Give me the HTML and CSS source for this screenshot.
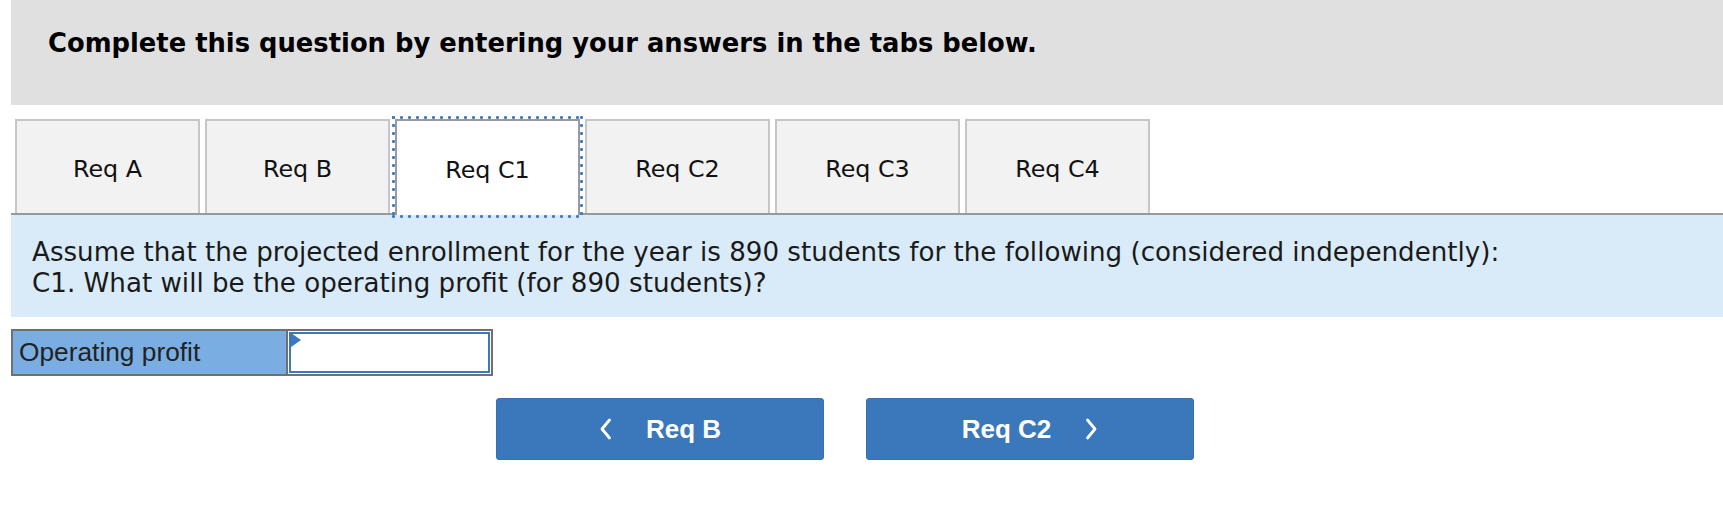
FILE: index.html
```html
<!DOCTYPE html>
<html lang="en">
<head>
<meta charset="utf-8">
<title>Req C1</title>
<link rel="stylesheet" href="styles.css">
</head>
<body>
<div class="page">
  <div class="header">
    <h1 class="header-title">Complete this question by entering your answers in the tabs below.</h1>
  </div>
  <div class="tabs">
    <div class="tab">Req A</div>
    <div class="tab">Req B</div>
    <div class="tab active">Req C1</div>
    <div class="tab">Req C2</div>
    <div class="tab">Req C3</div>
    <div class="tab">Req C4</div>
  </div>
  <div class="prompt">
    <p class="prompt-text">Assume that the projected enrollment for the year is 890 students for the following (considered independently):<br>C1. What will be the operating profit (for 890 students)?</p>
  </div>
  <div class="answer">
    <div class="answer-label">Operating profit</div>
    <div class="answer-cell"><div class="answer-input"></div></div>
  </div>
  <div class="nav">
    <div class="btn">
      <svg class="chev" width="13" height="22" viewBox="0 0 13 22"><polyline points="10.5,2 3,11 10.5,20" fill="none" stroke="#fff" stroke-width="2.8" stroke-linecap="round" stroke-linejoin="round"/></svg>
      <span>Req B</span>
    </div>
    <div class="btn">
      <span>Req C2</span>
      <svg class="chev" width="13" height="22" viewBox="0 0 13 22"><polyline points="2.5,2 10,11 2.5,20" fill="none" stroke="#fff" stroke-width="2.8" stroke-linecap="round" stroke-linejoin="round"/></svg>
    </div>
  </div>
</div>
</body>
</html>
```

FILE: styles.css
```css
html, body {
  margin: 0;
  padding: 0;
  background: #ffffff;
}

body {
  font-family: "DejaVu Sans", Verdana, sans-serif;
  color: #1a1a1a;
}

.page {
  margin-left: 11px;
}

.header {
  background: #e0e0e0;
  height: 105px;
  box-sizing: border-box;
  padding: 28px 0 0 37px;
}

.header-title {
  margin: 0;
  font-size: 25.8px;
  line-height: 30px;
  font-weight: bold;
  color: #000;
}

.tabs {
  display: flex;
  gap: 5px;
  margin-top: 14px;
  padding-left: 4px;
  border-bottom: 2px solid #999999;
  height: 94px;
}

.tab {
  width: 185px;
  height: 94px;
  box-sizing: border-box;
  border: 2px solid #c6c6c6;
  border-bottom: none;
  background: #f2f2f2;
  display: flex;
  align-items: center;
  justify-content: center;
  font-size: 23.8px;
  color: #111;
  padding-top: 4px;
}

.tab.active {
  position: relative;
  background: #ffffff;
  border-color: #9a9a9a;
  height: 96px;
  margin-bottom: -2px;
}

.tab.active::after {
  content: "";
  position: absolute;
  left: -5px;
  right: -5px;
  top: -5px;
  bottom: -3px;
  background:
    radial-gradient(circle at 1.5px 1.5px, #3c7cc7 1.3px, transparent 1.7px) left top / 8px 3px repeat-x,
    radial-gradient(circle at 1.5px 1.5px, #3c7cc7 1.3px, transparent 1.7px) left bottom / 8px 3px repeat-x,
    radial-gradient(circle at 1.5px 1.5px, #3c7cc7 1.3px, transparent 1.7px) left top / 3px 8px repeat-y,
    radial-gradient(circle at 1.5px 1.5px, #3c7cc7 1.3px, transparent 1.7px) right top / 3px 8px repeat-y;
  pointer-events: none;
}

.prompt {
  background: #d9ebf8;
  height: 102px;
  box-sizing: border-box;
  padding: 22px 21px 0 21px;
}

.prompt-text {
  margin: 0;
  font-size: 26.15px;
  line-height: 30.6px;
  color: #1a1a1a;
}

.answer {
  display: flex;
  margin-top: 12px;
  width: 482px;
  height: 47px;
  box-sizing: border-box;
  border: 2px solid #707070;
}

.answer-label {
  width: 275px;
  box-sizing: border-box;
  background: #7aaee3;
  border-right: 2px solid #707070;
  font-family: "Liberation Sans", Arial, sans-serif;
  font-size: 26.3px;
  color: #222;
  display: flex;
  align-items: center;
  padding-left: 6px;
}

.answer-cell {
  flex: 1;
  padding: 1px;
  background: #fff;
}

.answer-input {
  position: relative;
  height: 100%;
  box-sizing: border-box;
  border: 2px solid #3a78c0;
  background: #fff;
}

.answer-input::before {
  content: "";
  position: absolute;
  left: 0;
  top: -1px;
  width: 0;
  height: 0;
  border-left: 10px solid #3a78c0;
  border-top: 7px solid transparent;
  border-bottom: 7px solid transparent;
}

.nav {
  display: flex;
  gap: 42px;
  margin-top: 22px;
  padding-left: 485px;
}

.btn {
  width: 328px;
  height: 62px;
  box-sizing: border-box;
  background: #3b77bb;
  border: 1px solid #3570b2;
  border-radius: 3px;
  color: #ffffff;
  font-family: "Liberation Sans", Arial, sans-serif;
  font-weight: bold;
  font-size: 26px;
  display: flex;
  align-items: center;
  justify-content: center;
  gap: 34px;
}

.chev {
  display: block;
}
```
